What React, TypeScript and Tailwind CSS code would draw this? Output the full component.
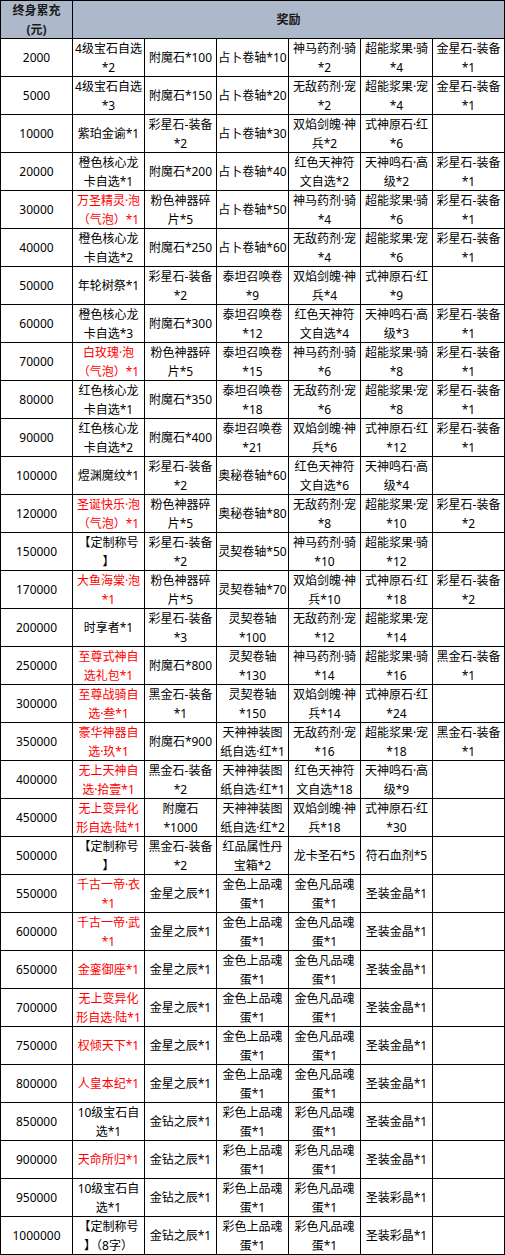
import React from "react"

type Row = {
  amount: string
  cells: string[]
  red?: boolean
}

const gold = ["金色上品魂\n蛋*1", "金色凡品魂\n蛋*1"]
const color = ["彩色上品魂\n蛋*1", "彩色凡品魂\n蛋*1"]

const rows: Row[] = [
  { amount: "2000", cells: ["4级宝石自选\n*2", "附魔石*100", "占卜卷轴*10", "神马药剂·骑\n*2", "超能浆果·骑\n*4", "金星石-装备\n*1"] },
  { amount: "5000", cells: ["4级宝石自选\n*3", "附魔石*150", "占卜卷轴*20", "无敌药剂·宠\n*2", "超能浆果·宠\n*4", "金星石-装备\n*1"] },
  { amount: "10000", cells: ["紫珀金谕*1", "彩星石-装备\n*2", "占卜卷轴*30", "双焰剑魄·神\n兵*2", "式神原石·红\n*6", ""] },
  { amount: "20000", cells: ["橙色核心龙\n卡自选*1", "附魔石*200", "占卜卷轴*40", "红色天神符\n文自选*2", "天神鸣石·高\n级*2", "彩星石-装备\n*1"] },
  { amount: "30000", red: true, cells: ["万圣精灵·泡\n（气泡）*1", "粉色神器碎\n片*5", "占卜卷轴*50", "神马药剂·骑\n*4", "超能浆果·骑\n*6", "彩星石-装备\n*1"] },
  { amount: "40000", cells: ["橙色核心龙\n卡自选*2", "附魔石*250", "占卜卷轴*60", "无敌药剂·宠\n*4", "超能浆果·宠\n*6", "彩星石-装备\n*1"] },
  { amount: "50000", cells: ["年轮树祭*1", "彩星石-装备\n*2", "泰坦召唤卷\n*9", "双焰剑魄·神\n兵*4", "式神原石·红\n*9", ""] },
  { amount: "60000", cells: ["橙色核心龙\n卡自选*3", "附魔石*300", "泰坦召唤卷\n*12", "红色天神符\n文自选*4", "天神鸣石·高\n级*3", "彩星石-装备\n*1"] },
  { amount: "70000", red: true, cells: ["白玫瑰·泡\n（气泡）*1", "粉色神器碎\n片*5", "泰坦召唤卷\n*15", "神马药剂·骑\n*6", "超能浆果·骑\n*8", "彩星石-装备\n*1"] },
  { amount: "80000", cells: ["红色核心龙\n卡自选*1", "附魔石*350", "泰坦召唤卷\n*18", "无敌药剂·宠\n*6", "超能浆果·宠\n*8", "彩星石-装备\n*1"] },
  { amount: "90000", cells: ["红色核心龙\n卡自选*2", "附魔石*400", "泰坦召唤卷\n*21", "双焰剑魄·神\n兵*6", "式神原石·红\n*12", "彩星石-装备\n*1"] },
  { amount: "100000", cells: ["煜渊魔纹*1", "彩星石-装备\n*2", "奥秘卷轴*60", "红色天神符\n文自选*6", "天神鸣石·高\n级*4", ""] },
  { amount: "120000", red: true, cells: ["圣诞快乐·泡\n（气泡）*1", "粉色神器碎\n片*5", "奥秘卷轴*80", "无敌药剂·宠\n*8", "超能浆果·宠\n*10", "彩星石-装备\n*2"] },
  { amount: "150000", cells: ["【定制称号\n】", "彩星石-装备\n*2", "灵契卷轴*50", "神马药剂·骑\n*10", "超能浆果·骑\n*12", ""] },
  { amount: "170000", red: true, cells: ["大鱼海棠·泡\n*1", "粉色神器碎\n片*5", "灵契卷轴*70", "双焰剑魄·神\n兵*10", "式神原石·红\n*18", "彩星石-装备\n*2"] },
  { amount: "200000", cells: ["时享者*1", "彩星石-装备\n*3", "灵契卷轴\n*100", "无敌药剂·宠\n*12", "超能浆果·宠\n*14", ""] },
  { amount: "250000", red: true, cells: ["至尊式神自\n选礼包*1", "附魔石*800", "灵契卷轴\n*130", "神马药剂·骑\n*14", "超能浆果·骑\n*16", "黑金石-装备\n*1"] },
  { amount: "300000", red: true, cells: ["至尊战骑自\n选·叁*1", "黑金石-装备\n*1", "灵契卷轴\n*150", "双焰剑魄·神\n兵*14", "式神原石·红\n*24", ""] },
  { amount: "350000", red: true, cells: ["豪华神器自\n选·玖*1", "附魔石*900", "天神神装图\n纸自选·红*1", "无敌药剂·宠\n*16", "超能浆果·宠\n*18", "黑金石-装备\n*1"] },
  { amount: "400000", red: true, cells: ["无上天神自\n选·拾壹*1", "黑金石-装备\n*2", "天神神装图\n纸自选·红*1", "红色天神符\n文自选*18", "天神鸣石·高\n级*9", ""] },
  { amount: "450000", red: true, cells: ["无上变异化\n形自选·陆*1", "附魔石\n*1000", "天神神装图\n纸自选·红*2", "双焰剑魄·神\n兵*18", "式神原石·红\n*30", ""] },
  { amount: "500000", cells: ["【定制称号\n】", "黑金石-装备\n*2", "红品属性丹\n宝箱*2", "龙卡圣石*5", "符石血剂*5", ""] },
  { amount: "550000", red: true, cells: ["千古一帝·衣\n*1", "金星之辰*1", ...gold, "圣装金晶*1", ""] },
  { amount: "600000", red: true, cells: ["千古一帝·武\n*1", "金星之辰*1", ...gold, "圣装金晶*1", ""] },
  { amount: "650000", red: true, cells: ["金銮御座*1", "金星之辰*1", ...gold, "圣装金晶*1", ""] },
  { amount: "700000", red: true, cells: ["无上变异化\n形自选·陆*1", "金星之辰*1", ...gold, "圣装金晶*1", ""] },
  { amount: "750000", red: true, cells: ["权倾天下*1", "金星之辰*1", ...gold, "圣装金晶*1", ""] },
  { amount: "800000", red: true, cells: ["人皇本纪*1", "金星之辰*1", ...gold, "圣装金晶*1", ""] },
  { amount: "850000", cells: ["10级宝石自\n选*1", "金钻之辰*1", ...color, "圣装金晶*1", ""] },
  { amount: "900000", red: true, cells: ["天命所归*1", "金钻之辰*1", ...color, "圣装金晶*1", ""] },
  { amount: "950000", cells: ["10级宝石自\n选*1", "金钻之辰*1", ...color, "圣装彩晶*1", ""] },
  { amount: "1000000", cells: ["【定制称号\n】（8字）", "金钻之辰*1", ...color, "圣装彩晶*1", ""] },
]

function Cell({ text, red }: { text: string; red?: boolean }) {
  return (
    <div
      className={`h-[37px] bg-white flex items-center justify-center text-center whitespace-pre leading-[19px] ${
        red ? "text-[#ff0000]" : "text-black"
      }`}
    >
      {text}
    </div>
  )
}

export default function App() {
  return (
    <div
      className="w-[505px] grid grid-cols-[repeat(7,71px)] gap-px bg-black p-px text-[12px]"
      style={{ fontFamily: '"Noto Sans", "Noto Sans CJK SC", sans-serif' }}
    >
      {/* header */}
      <div className="h-[37px] bg-[#adb9ca] flex items-center justify-center text-center font-bold leading-[19px] text-[#1a1a1a] whitespace-pre">
        {"终身累充\n(元)"}
      </div>
      <div className="col-span-6 h-[37px] bg-[#adb9ca] flex items-center justify-center font-bold text-[#1a1a1a]">
        奖励
      </div>

      {rows.map((row) => (
        <React.Fragment key={row.amount}>
          <Cell text={row.amount} />
          {row.cells.map((c, i) => (
            <Cell key={i} text={c} red={i === 0 && row.red} />
          ))}
        </React.Fragment>
      ))}
    </div>
  )
}
